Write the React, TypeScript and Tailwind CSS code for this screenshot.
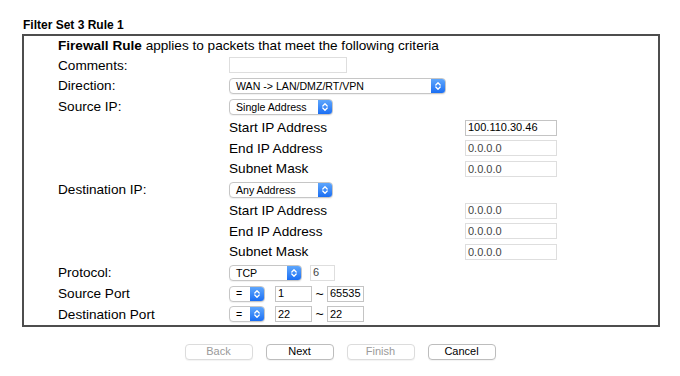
const FONT = "font-['Liberation_Sans','Helvetica',Arial,sans-serif]";

const Chevrons = () => (
  <svg width="8" height="12" viewBox="0 0 8 12" fill="none">
    <path d="M1.8 5 L4 2.8 L6.2 5" stroke="white" strokeWidth="1.3" strokeLinecap="round" strokeLinejoin="round" />
    <path d="M1.8 7 L4 9.2 L6.2 7" stroke="white" strokeWidth="1.3" strokeLinecap="round" strokeLinejoin="round" />
  </svg>
);

function Select({ value, className }: { value: string; className: string }) {
  return (
    <div
      className={`flex h-[16px] items-stretch overflow-hidden rounded-[4px] border border-[#c6c6c6] bg-white shadow-[0_1px_1px_rgba(0,0,0,0.06)] ${className}`}
    >
      <span className="flex flex-1 items-center pl-[6px] text-[10.6px] leading-none text-black">{value}</span>
      <span className="flex w-[14px] items-center justify-center bg-gradient-to-b from-[#5ea6fc] to-[#1a6ef3]">
        <Chevrons />
      </span>
    </div>
  );
}

function Field({ value, className, dark }: { value: string; className: string; dark?: boolean }) {
  return (
    <div
      className={`flex h-[16px] items-center border bg-white pl-[2px] text-[11px] leading-none ${
        dark ? "border-[#c4c4c4] text-black" : "border-[#dedede] text-[#444]"
      } ${className}`}
    >
      {value}
    </div>
  );
}

function Row({ label, children }: { label?: string; children?: React.ReactNode }) {
  return (
    <div className="flex h-[20.75px] items-center">
      <div className="w-[171px] shrink-0 text-[13.6px] leading-none">{label}</div>
      <div className="flex items-center">{children}</div>
    </div>
  );
}

function SubRow({ label, value, dark }: { label: string; value: string; dark?: boolean }) {
  return (
    <Row>
      <div className="w-[236px] shrink-0 text-[13.6px] leading-none">{label}</div>
      <Field value={value} dark={dark} className="w-[92px]" />
    </Row>
  );
}

function Button({ label, disabled }: { label: string; disabled?: boolean }) {
  return (
    <div
      className={`flex h-[16px] w-[68px] items-center justify-center rounded-[4px] border bg-white text-[11px] leading-none shadow-[0_1px_1px_rgba(0,0,0,0.05)] ${
        disabled ? "border-[#dcdcdc] text-[#9a9a9a]" : "border-[#bdbdbd] text-black"
      }`}
    >
      {label}
    </div>
  );
}

export default function App() {
  return (
    <div className={`h-[376px] w-[680px] bg-white pt-[18px] text-black ${FONT}`}>
      <div className="ml-[23px] text-[12px] font-bold leading-[14px]">Filter Set 3 Rule 1</div>
      <div className="ml-[22px] mt-[2px] w-[638px] border-2 border-[#4d4d4d] pl-[34px]">
        <div className="flex h-[19px] items-center text-[13.6px] leading-none">
          <span className="font-bold">Firewall Rule</span>
          <span className="whitespace-pre"> applies to packets that meet the following criteria</span>
        </div>
        <Row label="Comments:">
          <Field value="" className="w-[118px]" />
        </Row>
        <Row label="Direction:">
          <Select value="WAN -> LAN/DMZ/RT/VPN" className="w-[217px]" />
        </Row>
        <Row label="Source IP:">
          <Select value="Single Address" className="w-[104px]" />
        </Row>
        <SubRow label="Start IP Address" value="100.110.30.46" dark />
        <SubRow label="End IP Address" value="0.0.0.0" />
        <SubRow label="Subnet Mask" value="0.0.0.0" />
        <Row label="Destination IP:">
          <Select value="Any Address" className="w-[104px]" />
        </Row>
        <SubRow label="Start IP Address" value="0.0.0.0" />
        <SubRow label="End IP Address" value="0.0.0.0" />
        <SubRow label="Subnet Mask" value="0.0.0.0" />
        <Row label="Protocol:">
          <Select value="TCP" className="w-[73px]" />
          <Field value="6" className="ml-[8px] w-[25px]" />
        </Row>
        <Row label="Source Port">
          <Select value="=" className="w-[36px]" />
          <Field value="1" dark className="ml-[10px] w-[37px]" />
          <span className="w-[15px] text-center text-[14px] leading-none">~</span>
          <Field value="65535" dark className="w-[37px]" />
        </Row>
        <Row label="Destination Port">
          <Select value="=" className="w-[36px]" />
          <Field value="22" dark className="ml-[10px] w-[37px]" />
          <span className="w-[15px] text-center text-[14px] leading-none">~</span>
          <Field value="22" dark className="w-[37px]" />
        </Row>
      </div>
      <div className="mt-[17px] flex justify-center gap-[13px]">
        <Button label="Back" disabled />
        <Button label="Next" />
        <Button label="Finish" disabled />
        <Button label="Cancel" />
      </div>
    </div>
  );
}
